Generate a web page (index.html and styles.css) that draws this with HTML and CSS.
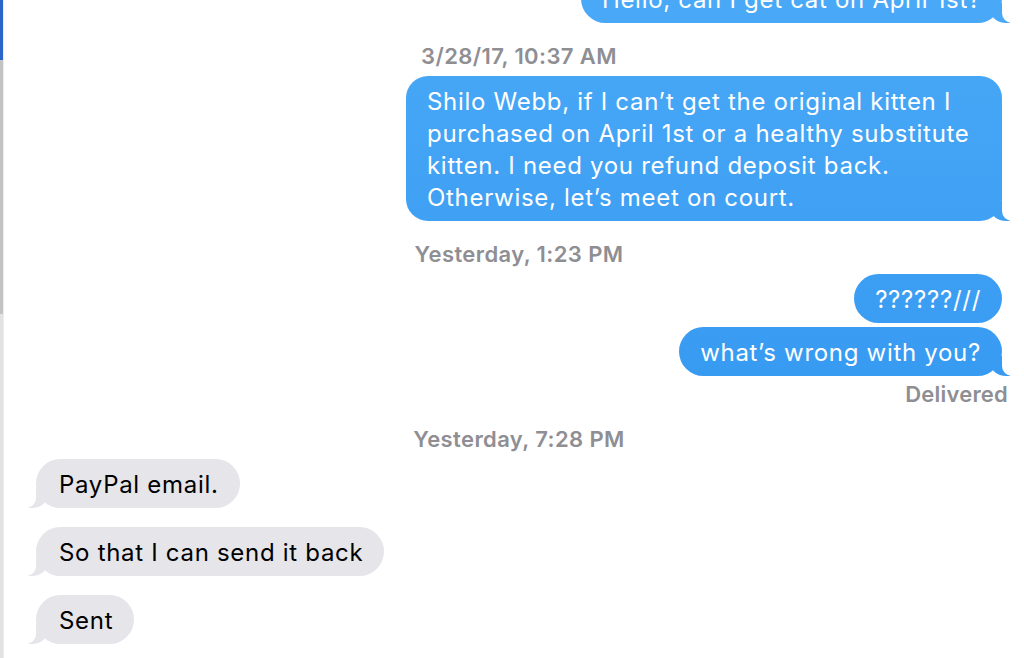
FILE: index.html
```html
<!DOCTYPE html>
<html lang="en">
<head>
  <meta charset="UTF-8">
  <title>Messages</title>
  <link rel="stylesheet" href="styles.css">
</head>
<body>
  <div class="window">
    <aside class="sidebar-edge">
      <div class="edge-selected"></div>
      <div class="edge-row"></div>
      <div class="edge-rest"></div>
    </aside>
    <main class="chat">
      <div class="row out first">
        <div class="msg sent tail">Hello, can I get cat on April 1st?</div>
      </div>

      <div class="stamp">3/28/17, 10:37 AM</div>
      <div class="row out">
        <div class="msg sent tail wide">Shilo Webb, if I can’t get the original kitten I purchased on April 1st or a healthy substitute kitten. I need you refund deposit back. Otherwise, let’s meet on court.</div>
      </div>

      <div class="stamp">Yesterday, 1:23 PM</div>
      <div class="row out">
        <div class="msg sent">??????///</div>
      </div>
      <div class="row out close">
        <div class="msg sent tail">what’s wrong with you?</div>
      </div>
      <div class="status">Delivered</div>

      <div class="stamp">Yesterday, 7:28 PM</div>
      <div class="row in">
        <div class="msg received tail">PayPal email.</div>
      </div>
      <div class="row in apart">
        <div class="msg received tail">So that I can send it back</div>
      </div>
      <div class="row in apart">
        <div class="msg received tail">Sent</div>
      </div>
    </main>
  </div>
</body>
</html>
```

FILE: styles.css
```css
html, body { margin: 0; height: 100%; overflow: hidden; background: #fff; }
body { font-family: Inter, "Noto Sans", sans-serif; -webkit-font-smoothing: antialiased; }

.window { display: flex; height: 658px; }

.sidebar-edge { width: 3px; border-right: 1px solid #ececec; display: flex; flex-direction: column; }
.edge-selected { height: 60px; background: #2b65c9; }
.edge-row { height: 254px; background: #c3c3c3; }
.edge-rest { flex: 1; background: #e2e2e2; }

.chat { flex: 1; padding: 0 22px 0 32px; display: flex; flex-direction: column; }

.row { display: flex; }
.row.out { justify-content: flex-end; }
.row.in { justify-content: flex-start; }
.row.first { margin-top: -26px; }
.row.close { margin-top: 4px; }
.row.apart { margin-top: 19px; }

.msg { position: relative; z-index: 0; font-size: 24px; line-height: 32px; padding: 10px 21px 7px; border-radius: 25px; letter-spacing: 0.7px; }
.msg.wide { max-width: 554px; border-radius: 22px; }

.sent { color: #fff; background: linear-gradient(#4aa9f7, #2a90ee) fixed; }
.received { color: #000; background: #e5e5ea; padding-left: 23px; }

/* iMessage tails */
.msg.tail::before, .msg.tail::after { content: ""; position: absolute; bottom: 0; height: 20px; }
.sent.tail::before { z-index: -1; right: -8px; width: 20px; background: linear-gradient(#4aa9f7, #2a90ee) fixed; border-bottom-left-radius: 16px 14px; }
.sent.tail::after { z-index: 1; right: -26px; width: 26px; background: #fff; border-bottom-left-radius: 10px; }
.received.tail::before { z-index: -1; left: -8px; width: 20px; background: #e5e5ea; border-bottom-right-radius: 16px 14px; }
.received.tail::after { z-index: 1; left: -26px; width: 26px; background: #fff; border-bottom-right-radius: 10px; }

.stamp { margin: 20px 0 7px; text-align: center; font-size: 22px; line-height: 26px; font-weight: 600; letter-spacing: 0.4px; color: #8e8e93; }
.status { margin: 6px -6px 0 0; text-align: right; font-size: 22px; line-height: 24px; font-weight: 600; letter-spacing: 0.2px; color: #8e8e93; }
```
